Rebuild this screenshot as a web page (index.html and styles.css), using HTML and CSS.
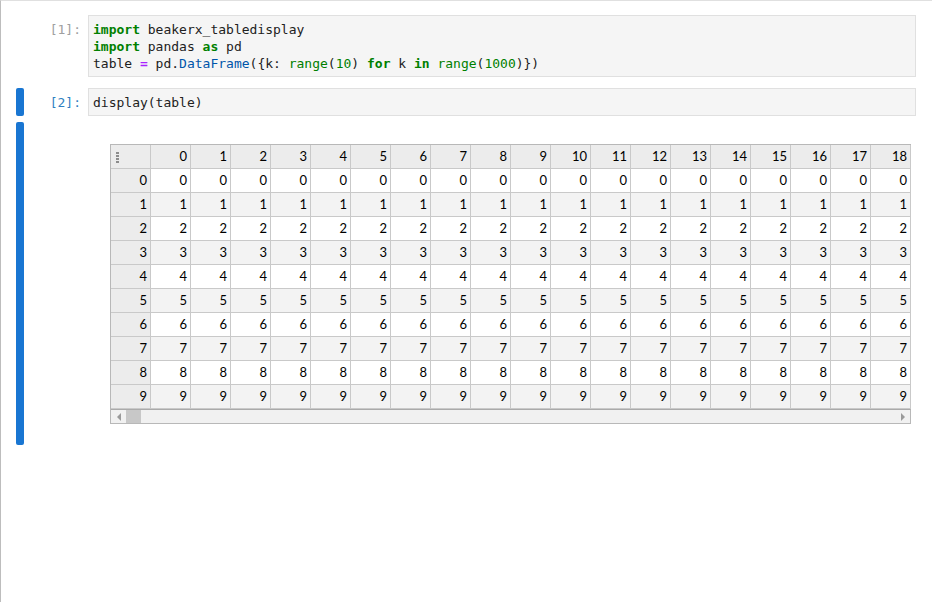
FILE: index.html
```html
<!DOCTYPE html>
<html>
<head>
<meta charset="utf-8">
<link rel="stylesheet" href="styles.css">
</head>
<body>
<div class="page">
  <div class="notebook">
    <div class="cell cell-first">
      <div class="collapser"></div>
      <div class="prompt">[1]:</div>
      <div class="input"><div class="line"><span class="kw">import</span> beakerx_tabledisplay</div><div class="line"><span class="kw">import</span> pandas <span class="kw">as</span> pd</div><div class="line">table <span class="op">=</span> pd.<span class="fn">DataFrame</span>({k: <span class="bi">range</span>(<span class="num">10</span>) <span class="kw">for</span> k <span class="kw">in</span> <span class="bi">range</span>(<span class="num">1000</span>)})</div></div>
    </div>
    <div class="cell">
      <div class="collapser active"></div>
      <div class="prompt active-prompt">[2]:</div>
      <div class="input"><div class="line">display(table)</div></div>
    </div>
    <div class="output">
      <div class="collapser active"></div>
      <div class="prompt"></div>
      <div class="output-content">
        <div class="tbl">
          <div class="row head"><div class="c idx"><span class="grip"></span></div><div class="c">0</div><div class="c">1</div><div class="c">2</div><div class="c">3</div><div class="c">4</div><div class="c">5</div><div class="c">6</div><div class="c">7</div><div class="c">8</div><div class="c">9</div><div class="c">10</div><div class="c">11</div><div class="c">12</div><div class="c">13</div><div class="c">14</div><div class="c">15</div><div class="c">16</div><div class="c">17</div><div class="c">18</div></div>
          <div class="row"><div class="c idx">0</div><div class="c">0</div><div class="c">0</div><div class="c">0</div><div class="c">0</div><div class="c">0</div><div class="c">0</div><div class="c">0</div><div class="c">0</div><div class="c">0</div><div class="c">0</div><div class="c">0</div><div class="c">0</div><div class="c">0</div><div class="c">0</div><div class="c">0</div><div class="c">0</div><div class="c">0</div><div class="c">0</div><div class="c">0</div></div>
          <div class="row odd"><div class="c idx">1</div><div class="c">1</div><div class="c">1</div><div class="c">1</div><div class="c">1</div><div class="c">1</div><div class="c">1</div><div class="c">1</div><div class="c">1</div><div class="c">1</div><div class="c">1</div><div class="c">1</div><div class="c">1</div><div class="c">1</div><div class="c">1</div><div class="c">1</div><div class="c">1</div><div class="c">1</div><div class="c">1</div><div class="c">1</div></div>
          <div class="row"><div class="c idx">2</div><div class="c">2</div><div class="c">2</div><div class="c">2</div><div class="c">2</div><div class="c">2</div><div class="c">2</div><div class="c">2</div><div class="c">2</div><div class="c">2</div><div class="c">2</div><div class="c">2</div><div class="c">2</div><div class="c">2</div><div class="c">2</div><div class="c">2</div><div class="c">2</div><div class="c">2</div><div class="c">2</div><div class="c">2</div></div>
          <div class="row odd"><div class="c idx">3</div><div class="c">3</div><div class="c">3</div><div class="c">3</div><div class="c">3</div><div class="c">3</div><div class="c">3</div><div class="c">3</div><div class="c">3</div><div class="c">3</div><div class="c">3</div><div class="c">3</div><div class="c">3</div><div class="c">3</div><div class="c">3</div><div class="c">3</div><div class="c">3</div><div class="c">3</div><div class="c">3</div><div class="c">3</div></div>
          <div class="row"><div class="c idx">4</div><div class="c">4</div><div class="c">4</div><div class="c">4</div><div class="c">4</div><div class="c">4</div><div class="c">4</div><div class="c">4</div><div class="c">4</div><div class="c">4</div><div class="c">4</div><div class="c">4</div><div class="c">4</div><div class="c">4</div><div class="c">4</div><div class="c">4</div><div class="c">4</div><div class="c">4</div><div class="c">4</div><div class="c">4</div></div>
          <div class="row odd"><div class="c idx">5</div><div class="c">5</div><div class="c">5</div><div class="c">5</div><div class="c">5</div><div class="c">5</div><div class="c">5</div><div class="c">5</div><div class="c">5</div><div class="c">5</div><div class="c">5</div><div class="c">5</div><div class="c">5</div><div class="c">5</div><div class="c">5</div><div class="c">5</div><div class="c">5</div><div class="c">5</div><div class="c">5</div><div class="c">5</div></div>
          <div class="row"><div class="c idx">6</div><div class="c">6</div><div class="c">6</div><div class="c">6</div><div class="c">6</div><div class="c">6</div><div class="c">6</div><div class="c">6</div><div class="c">6</div><div class="c">6</div><div class="c">6</div><div class="c">6</div><div class="c">6</div><div class="c">6</div><div class="c">6</div><div class="c">6</div><div class="c">6</div><div class="c">6</div><div class="c">6</div><div class="c">6</div></div>
          <div class="row odd"><div class="c idx">7</div><div class="c">7</div><div class="c">7</div><div class="c">7</div><div class="c">7</div><div class="c">7</div><div class="c">7</div><div class="c">7</div><div class="c">7</div><div class="c">7</div><div class="c">7</div><div class="c">7</div><div class="c">7</div><div class="c">7</div><div class="c">7</div><div class="c">7</div><div class="c">7</div><div class="c">7</div><div class="c">7</div><div class="c">7</div></div>
          <div class="row"><div class="c idx">8</div><div class="c">8</div><div class="c">8</div><div class="c">8</div><div class="c">8</div><div class="c">8</div><div class="c">8</div><div class="c">8</div><div class="c">8</div><div class="c">8</div><div class="c">8</div><div class="c">8</div><div class="c">8</div><div class="c">8</div><div class="c">8</div><div class="c">8</div><div class="c">8</div><div class="c">8</div><div class="c">8</div><div class="c">8</div></div>
          <div class="row odd"><div class="c idx">9</div><div class="c">9</div><div class="c">9</div><div class="c">9</div><div class="c">9</div><div class="c">9</div><div class="c">9</div><div class="c">9</div><div class="c">9</div><div class="c">9</div><div class="c">9</div><div class="c">9</div><div class="c">9</div><div class="c">9</div><div class="c">9</div><div class="c">9</div><div class="c">9</div><div class="c">9</div><div class="c">9</div><div class="c">9</div></div>
          <div class="hscroll">
            <span class="arrow left"></span>
            <span class="thumb"></span>
            <span class="track-fill"></span>
            <span class="arrow right"></span>
          </div>
        </div>
      </div>
    </div>
  </div>
</div>
</body>
</html>
```
FILE: styles.css
```css
html, body {
  margin: 0;
  padding: 0;
  background: #ffffff;
}
.page {
  box-sizing: border-box;
  min-height: 602px;
  border-top: 1px solid #e0e0e0;
  border-left: 1px solid #bdbdbd;
}
.notebook {
  padding-top: 14px;
}
.cell, .output {
  display: flex;
  align-items: stretch;
}
.cell-first {
  margin-bottom: 11px;
}
.output {
  margin-top: 6px;
}
.collapser {
  width: 8px;
  margin-left: 15px;
  flex: none;
  border-radius: 2px;
}
.collapser.active {
  background: #1976d2;
}
.prompt {
  width: 64px;
  flex: none;
  box-sizing: border-box;
  padding: 6px 7px 0 0;
  text-align: right;
  font-family: "DejaVu Sans Mono", monospace;
  font-size: 13px;
  line-height: 17px;
  color: #a0a0a0;
}
.active-prompt {
  color: #307fc1;
}
.input {
  flex: 1;
  margin-right: 16px;
  background: #f5f5f5;
  border: 1px solid #e0e0e0;
  padding: 5px 4px 4px 4px;
  font-family: "DejaVu Sans Mono", monospace;
  font-size: 13px;
  line-height: 17px;
  color: #212121;
}
.line {
  height: 17px;
  white-space: pre;
}
.kw { color: #008000; font-weight: bold; }
.op { color: #aa22ff; font-weight: bold; }
.fn { color: #0055aa; }
.bi { color: #008000; }
.num { color: #008000; }

.output-content {
  flex: 1;
  padding: 22px 0 21px 22px;
}
.tbl {
  width: 801px;
  box-sizing: border-box;
  border-left: 1px solid #b8b8b8;
  border-top: 1px solid #b8b8b8;
  overflow: hidden;
  font-family: "Lato", "Liberation Sans", sans-serif;
  font-size: 13px;
  color: #000;
}
.row {
  display: flex;
  background: #ffffff;
}
.row.odd {
  background: #f3f3f3;
}
.row.head {
  background: #ececec;
}
.c {
  flex: none;
  width: 40px;
  height: 24px;
  box-sizing: border-box;
  border-right: 1px solid #c9c9c9;
  border-bottom: 1px solid #c9c9c9;
  text-align: right;
  padding-right: 3px;
  line-height: 23px;
}
.row:last-of-type .c {
  border-bottom-color: #b0b0b0;
}
.c.idx {
  background: #ececec;
  position: relative;
}
.grip {
  position: absolute;
  left: 5px;
  top: 7px;
  width: 3px;
  height: 11px;
  background: repeating-linear-gradient(to bottom, #8c8c8c 0, #8c8c8c 2px, transparent 2px, transparent 3px);
}
.hscroll {
  display: flex;
  align-items: stretch;
  width: 800px;
  height: 15px;
  box-sizing: border-box;
  border-top: 1px solid #aaaaaa;
  border-right: 1px solid #b8b8b8;
  border-bottom: 1px solid #b8b8b8;
  background: #f1f1f1;
}
.arrow {
  flex: none;
  width: 15px;
  display: flex;
  align-items: center;
  justify-content: center;
}
.arrow.left::before {
  content: "";
  border-top: 4px solid transparent;
  border-bottom: 4px solid transparent;
  border-right: 4px solid #9a9a9a;
}
.arrow.right::before {
  content: "";
  border-top: 4px solid transparent;
  border-bottom: 4px solid transparent;
  border-left: 4px solid #9a9a9a;
}
.thumb {
  flex: none;
  width: 15px;
  background: #c8c8c8;
}
.track-fill {
  flex: 1;
}
```
